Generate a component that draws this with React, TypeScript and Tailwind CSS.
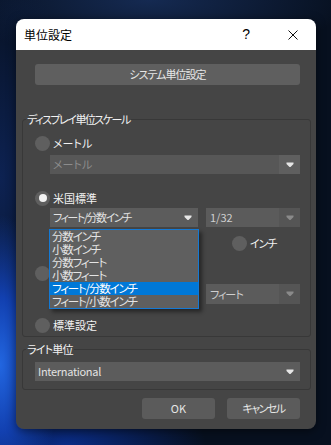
import React from "react";

const FONT = "font-['Noto_Sans_CJK_JP','Noto_Sans',sans-serif] [font-feature-settings:'palt'_1]";

function Arrow({ dim }: { dim?: boolean }) {
  return (
    <svg width="8" height="6" viewBox="0 0 8 6" className="block">
      <path d="M0.5 0.5h7v1.5L4.5 5h-1L0.5 2z" fill={dim ? "#8a8a8a" : "#e6e6e6"} />
    </svg>
  );
}

function Radio({ on, label, track = "" }: { on?: boolean; label?: string; track?: string }) {
  return (
    <div className="flex items-center h-[16px]">
      <div className="w-[15px] h-[15px] rounded-full bg-[#5f5f5f] flex items-center justify-center">
        {on && <div className="w-[8px] h-[8px] rounded-full bg-[#f2f2f2]" />}
      </div>
      {label && <span className={`ml-[3px] text-[11px] leading-none text-[#f2f2f2] ${track}`}>{label}</span>}
    </div>
  );
}

function Select({
  text,
  w,
  disabled,
  track = "",
  children,
}: {
  text: string;
  w: string;
  disabled?: boolean;
  track?: string;
  children?: React.ReactNode;
}) {
  return (
    <div className={`relative ${w} h-[19px] flex`}>
      <div
        className={`flex-1 flex items-center pl-[3px] text-[11px] ${track} ${
          disabled ? "bg-[#575757] text-[#8c8c8c]" : "bg-[#5c5c5c] text-[#e2e2e2]"
        }`}
      >
        {text}
      </div>
      <div className={`w-[21px] flex items-center justify-center ${disabled ? "bg-[#5f5f5f]" : "bg-[#5c5c5c]"}`}>
        <Arrow />
      </div>
      {children}
    </div>
  );
}

function Select2({ text, w, h, track = "" }: { text: string; w: string; h: string; track?: string }) {
  return (
    <div className={`${w} ${h} flex`}>
      <div className={`flex-1 flex items-center pl-[4px] text-[11px] bg-[#5b5b5b] text-[#cfcfcf] ${track}`}>{text}</div>
      <div className="w-[21px] flex items-center justify-center bg-[#555555]">
        <Arrow dim />
      </div>
    </div>
  );
}

const items = ["分数インチ", "小数インチ", "分数フィート", "小数フィート", "フィート/分数インチ", "フィート/小数インチ"];

export default function App() {
  return (
    <div
      className={`${FONT} w-[331px] h-[445px] overflow-hidden pt-[19px] pl-[16px] bg-[#07101f] bg-[radial-gradient(ellipse_60px_150px_at_0%_82%,#2266e0_0%,#1240b0_45%,transparent_100%),radial-gradient(ellipse_140px_60px_at_20%_100%,#0a2c86_0%,transparent_100%),radial-gradient(ellipse_90px_200px_at_0%_40%,#0d2252_0%,transparent_100%),radial-gradient(ellipse_200px_60px_at_45%_0%,#152a52_0%,transparent_100%)]`}
    >
      <div className="w-[300px] h-[410px] rounded-[8px] overflow-hidden flex flex-col shadow-[0_2px_10px_rgba(0,0,0,0.5)]">
        <div className="h-[31px] bg-white flex items-center pl-[8px] pr-[18px] text-black">
          <span className="text-[12px]">単位設定</span>
          <span className="ml-auto mr-[38px] text-[14px] font-['Liberation_Sans',sans-serif]">?</span>
          <svg width="10" height="10" viewBox="0 0 10 10">
            <path d="M0.5 0.5L9.5 9.5M9.5 0.5L0.5 9.5" stroke="#111" strokeWidth="1" />
          </svg>
        </div>

        <div className="flex-1 bg-[#454545] pl-[6px] pr-[5px] flex flex-col">
          <button className="mt-[14px] ml-[13px] mr-[11px] h-[21px] rounded-[3px] bg-[#5f5f5f] text-[11px] tracking-[-1px] text-[#e6e6e6]">
            システム単位設定
          </button>

          <fieldset className="mt-[26px] border border-[#383838] rounded-[3px] px-0 pb-[3px]">
            <legend className="ml-[3px] px-[1px] h-[16px] leading-[16px] text-[11px] tracking-[-1.5px] text-[#f2f2f2]">
              ディスプレイ単位スケール
            </legend>
            <div className="mt-[8px] ml-[12px]">
              <Radio label="メートル" />
            </div>
            <div className="mt-[4px] ml-[27px]">
              <Select text="メートル" w="w-[250px]" disabled />
            </div>
            <div className="mt-[16px] ml-[12px]">
              <Radio on label="米国標準" />
            </div>
            <div className="mt-[2px] ml-[27px] flex gap-[8px]">
              <Select text="フィート/分数インチ" w="w-[148px]" track="tracking-[-1.5px]">
                <div className="absolute left-[-1px] top-[21px] w-[150px] h-[80px] border border-[#1479d4] bg-[#5f5f5f] z-10 shadow-[3px_3px_4px_rgba(0,0,0,0.45)] flex flex-col">
                  {items.map((it, i) => (
                    <div
                      key={it}
                      className={`h-[13px] leading-[13px] pl-[2px] text-[11.5px] tracking-[-1.2px] ${
                        i === 4 ? "bg-[#0078d7] text-white" : "text-[#e4e4e4]"
                      }`}
                    >
                      {it}
                    </div>
                  ))}
                </div>
              </Select>
              <Select2 text="1/32" w="w-[94px]" h="h-[19px]" />
            </div>
            <div className="mt-[8px] ml-[209px]">
              <Radio label="インチ" track="tracking-[-1px]" />
            </div>
            <div className="mt-[14px] ml-[12px]">
              <Radio />
            </div>
            <div className="mt-[3px] ml-[183px]">
              <Select2 text="フィート" w="w-[94px]" h="h-[20px]" track="tracking-[-1px]" />
            </div>
            <div className="mt-[13px] ml-[12px]">
              <Radio label="標準設定" />
            </div>
          </fieldset>

          <fieldset className="mt-[4px] border border-[#383838] rounded-[3px] pb-[8px]">
            <legend className="ml-[3px] px-[1px] h-[16px] leading-[16px] text-[11px] tracking-[-0.8px] text-[#f2f2f2]">
              ライト単位
            </legend>
            <div className="mt-[5px] ml-[12px] mr-[10px]">
              <Select text="International" w="w-[265px]" track="tracking-[-0.3px]" />
            </div>
          </fieldset>

          <div className="mt-[8px] mr-[11px] flex justify-end gap-[12px]">
            <button className="w-[73px] h-[21px] rounded-[3px] bg-[#5b5b5b] text-[11px] text-[#e6e6e6]">OK</button>
            <button className="w-[73px] h-[21px] rounded-[3px] bg-[#5b5b5b] text-[11px] tracking-[-1.5px] text-[#e6e6e6]">
              キャンセル
            </button>
          </div>
        </div>
      </div>
    </div>
  );
}
